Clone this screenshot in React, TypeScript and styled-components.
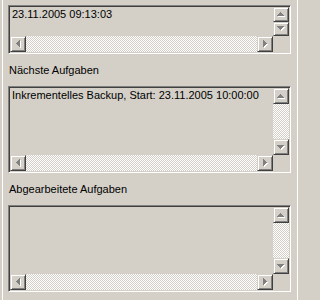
import React from "react";
import styled, { createGlobalStyle } from "styled-components";

const GlobalStyle = createGlobalStyle`
  html, body {
    margin: 0;
    padding: 0;
    background: #d4d0c8;
  }
  * {
    box-sizing: border-box;
  }
`;

type Dir = "up" | "down" | "left" | "right";

// pixel rows of the classic 7x4 arrow, drawn pointing up
const ARROW_ROWS = [
  [3, 1],
  [2, 3],
  [1, 5],
  [0, 7],
];

const Arrow = ({ dir }: { dir: Dir }) => {
  const vertical = dir === "up" || dir === "down";
  const w = vertical ? 8 : 5;
  const h = vertical ? 5 : 8;

  const rects = (color: string, off: number) =>
    ARROW_ROWS.map(([x, len], i) => {
      const row = dir === "down" || dir === "right" ? 3 - i : i;
      return vertical ? (
        <rect key={color + i} x={x + off} y={row + off} width={len} height={1} fill={color} />
      ) : (
        <rect key={color + i} x={row + off} y={x + off} width={1} height={len} fill={color} />
      );
    });

  return (
    <svg width={w} height={h} viewBox={`0 0 ${w} ${h}`} shapeRendering="crispEdges">
      {rects("#ffffff", 1)}
      {rects("#808080", 0)}
    </svg>
  );
};

const Frame = styled.div`
  width: 300px;
  height: 300px;
  overflow: hidden;
  background: #d4d0c8;
  font-family: "Liberation Sans", Arial, sans-serif;
  font-size: 11px;
  color: #000;
`;

const Panel = styled.div`
  height: 100%;
  margin: 0 2px;
  border-left: 1px solid #ffffff;
  border-right: 1px solid #ffffff;
  padding: 5px 6px 0 5px;
  display: flex;
  flex-direction: column;
`;

const Label = styled.div`
  height: 13px;
  line-height: 13px;
  margin: 10px 0 9px;
  padding-left: 1px;
  white-space: nowrap;
`;

const ListBox = styled.div<{ $height: number }>`
  height: ${({ $height }) => $height}px;
  flex-shrink: 0;
  border: 1px solid;
  border-color: #808080 #ffffff #ffffff #808080;
  box-shadow: inset 1px 1px #404040, inset -1px -1px #d4d0c8;
  padding: 1px;
  display: grid;
  grid-template-columns: 1fr 16px;
  grid-template-rows: 1fr 16px;
  background: #d4d0c8;
`;

const Content = styled.div`
  overflow: hidden;
  white-space: nowrap;
  line-height: 13px;
  padding: 1px 0 0 2px;
`;

const VScroll = styled.div`
  display: flex;
  flex-direction: column;
  min-height: 0;
`;

const HScroll = styled.div`
  display: flex;
`;

const Track = styled.div`
  flex: 1;
  min-width: 0;
  min-height: 0;
  background-image: conic-gradient(
    #ffffff 25%,
    #d4d0c8 0 50%,
    #ffffff 0 75%,
    #d4d0c8 0
  );
  background-size: 2px 2px;
`;

const ArrowButton = styled.div`
  flex: 0 1 16px;
  width: 16px;
  min-height: 0;
  background: #d4d0c8;
  border: 1px solid;
  border-color: #d4d0c8 #404040 #404040 #d4d0c8;
  box-shadow: inset 1px 1px #ffffff, inset -1px -1px #808080;
  display: flex;
  align-items: center;
  justify-content: center;
  overflow: hidden;

  svg {
    display: block;
  }
`;

const Corner = styled.div`
  background: #d4d0c8;
`;

const ScrollList = ({ height, text }: { height: number; text?: string }) => (
  <ListBox $height={height}>
    <Content>{text}</Content>
    <VScroll>
      <ArrowButton>
        <Arrow dir="up" />
      </ArrowButton>
      <Track />
      <ArrowButton>
        <Arrow dir="down" />
      </ArrowButton>
    </VScroll>
    <HScroll>
      <ArrowButton>
        <Arrow dir="left" />
      </ArrowButton>
      <Track />
      <ArrowButton>
        <Arrow dir="right" />
      </ArrowButton>
    </HScroll>
    <Corner />
  </ListBox>
);

const App = () => (
  <>
    <GlobalStyle />
    <Frame>
      <Panel>
        <ScrollList height={49} text="23.11.2005 09:13:03" />
        <Label>Nächste Aufgaben</Label>
        <ScrollList
          height={87}
          text="Inkrementelles Backup, Start: 23.11.2005 10:00:00"
        />
        <Label>Abgearbeitete Aufgaben</Label>
        <ScrollList height={87} />
      </Panel>
    </Frame>
  </>
);

export default App;
